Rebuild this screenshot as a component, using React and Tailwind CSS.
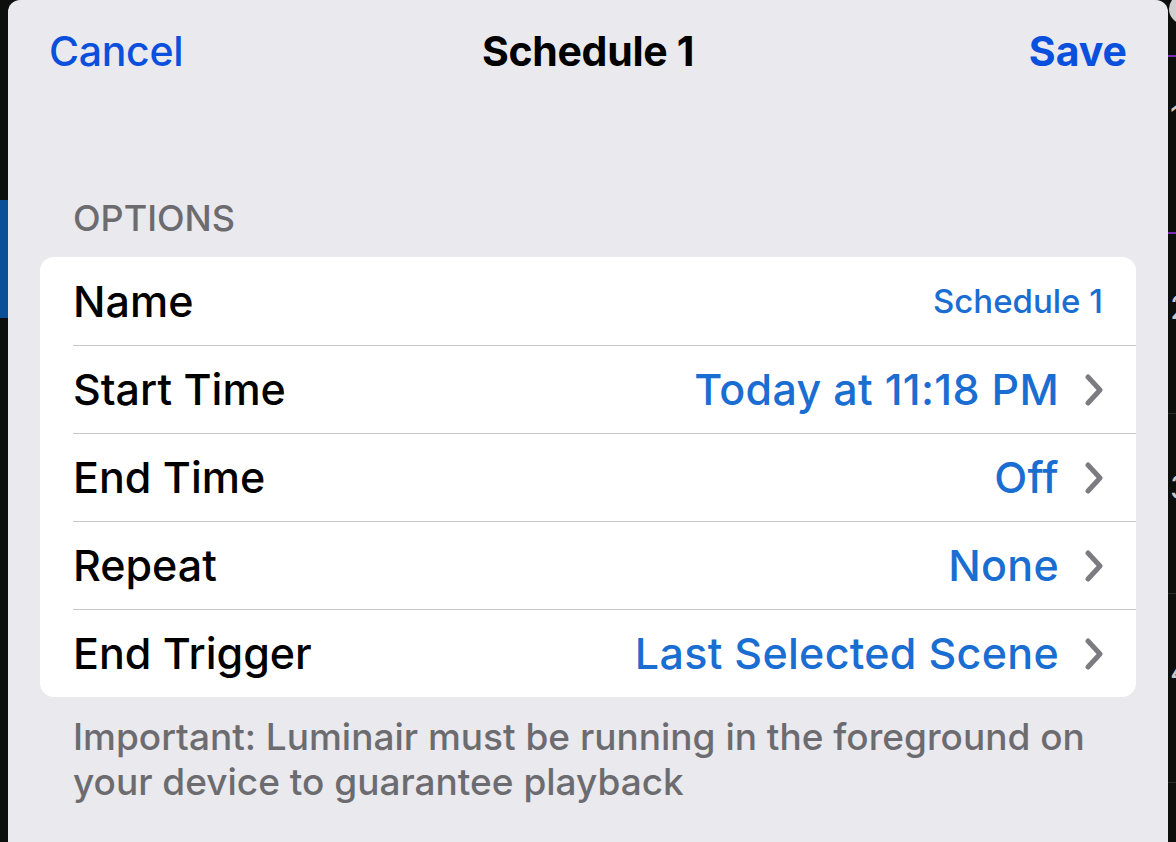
import React from "react";

const rows = [
  { label: "Name", value: "Schedule 1", small: true },
  { label: "Start Time", value: "Today at 11:18 PM" },
  { label: "End Time", value: "Off" },
  { label: "Repeat", value: "None" },
  { label: "End Trigger", value: "Last Selected Scene" },
];

function Chevron() {
  return (
    <svg width="18" height="32" viewBox="0 0 18 32" className="ml-[26px] shrink-0">
      <polyline
        points="3,3 15,16 3,29"
        fill="none"
        stroke="#7c7c80"
        strokeWidth="5"
        strokeLinecap="round"
        strokeLinejoin="round"
      />
    </svg>
  );
}

function Row({ label, value, small, first }) {
  return (
    <div className={`ml-[33px] h-[88px] flex items-center pr-[33px] ${first ? "" : "border-t border-[#c6c6c8]"}`}>
      <span className="text-[43px] leading-none font-medium text-black">{label}</span>
      <div className="ml-auto flex items-center">
        <span className={`${small ? "text-[33px]" : "text-[43px] tracking-[0.3px]"} leading-none font-medium text-[#1a6dd1]`}>
          {value}
        </span>
        {!small && <Chevron />}
      </div>
    </div>
  );
}

export default function App() {
  return (
    <div className="flex h-[842px] w-[1176px] overflow-hidden bg-[#0c0f0c] font-['Inter',sans-serif]">
      {/* left edge of the page behind the sheet */}
      <div className="w-[8px] shrink-0">
        <div className="mt-[200px] h-[118px] bg-[#0b4f98]" />
      </div>

      {/* sheet */}
      <div className="flex-1 flex flex-col rounded-t-[12px] bg-[#e9e9ee]">
        <div className="grid grid-cols-[1fr_auto_1fr] items-center px-[41px] pt-[31px]">
          <span className="text-[41px] leading-none font-medium tracking-[-0.3px] text-[#0b4fdd]">Cancel</span>
          <span className="text-[41px] leading-none font-bold tracking-[-0.3px] text-black">Schedule 1</span>
          <span className="justify-self-end text-[41px] leading-none font-bold text-[#0b4fdd]">Save</span>
        </div>

        <div className="mt-[128px] pl-[65px] text-[36px] leading-none font-medium text-[#6c6c70]">OPTIONS</div>

        <div className="mx-[32px] mt-[21px] rounded-[14px] bg-white overflow-hidden">
          {rows.map((r, i) => (
            <Row key={r.label} {...r} first={i === 0} />
          ))}
        </div>

        <p className="mt-[17px] pl-[65px] text-[37px] leading-[45px] font-medium text-[#6c6c70]">
          Important: Luminair must be running in the foreground on
          <br />
          your device to guarantee playback
        </p>
      </div>

      {/* right edge of the page behind the sheet */}
      <div className="w-[8px] shrink-0 overflow-hidden">
        <div className="w-[40px] flex flex-col text-[32px] leading-none text-[#c8c8c8]">
          <div className="h-[55px]">
            <div className="ml-[1px] -mt-[6px] h-[30px] w-[30px] rounded-full bg-[#cfcfcf]" />
          </div>
          <div className="h-[177px] border-t-2 border-[#7a2cb4] pt-[45px] pl-[2px]">1</div>
          <div className="h-[181px] border-t-2 border-[#7a2cb4] pt-[58px] pl-[2px]">2</div>
          <div className="h-[180px] border-t border-[#2a2d2a] pt-[58px] pl-[2px]">3</div>
          <div className="h-[189px] border-t border-[#2a2d2a] pt-[62px] pl-[2px]">4</div>
          <div className="h-[60px] border-t border-[#2a2d2a]" />
        </div>
      </div>
    </div>
  );
}
